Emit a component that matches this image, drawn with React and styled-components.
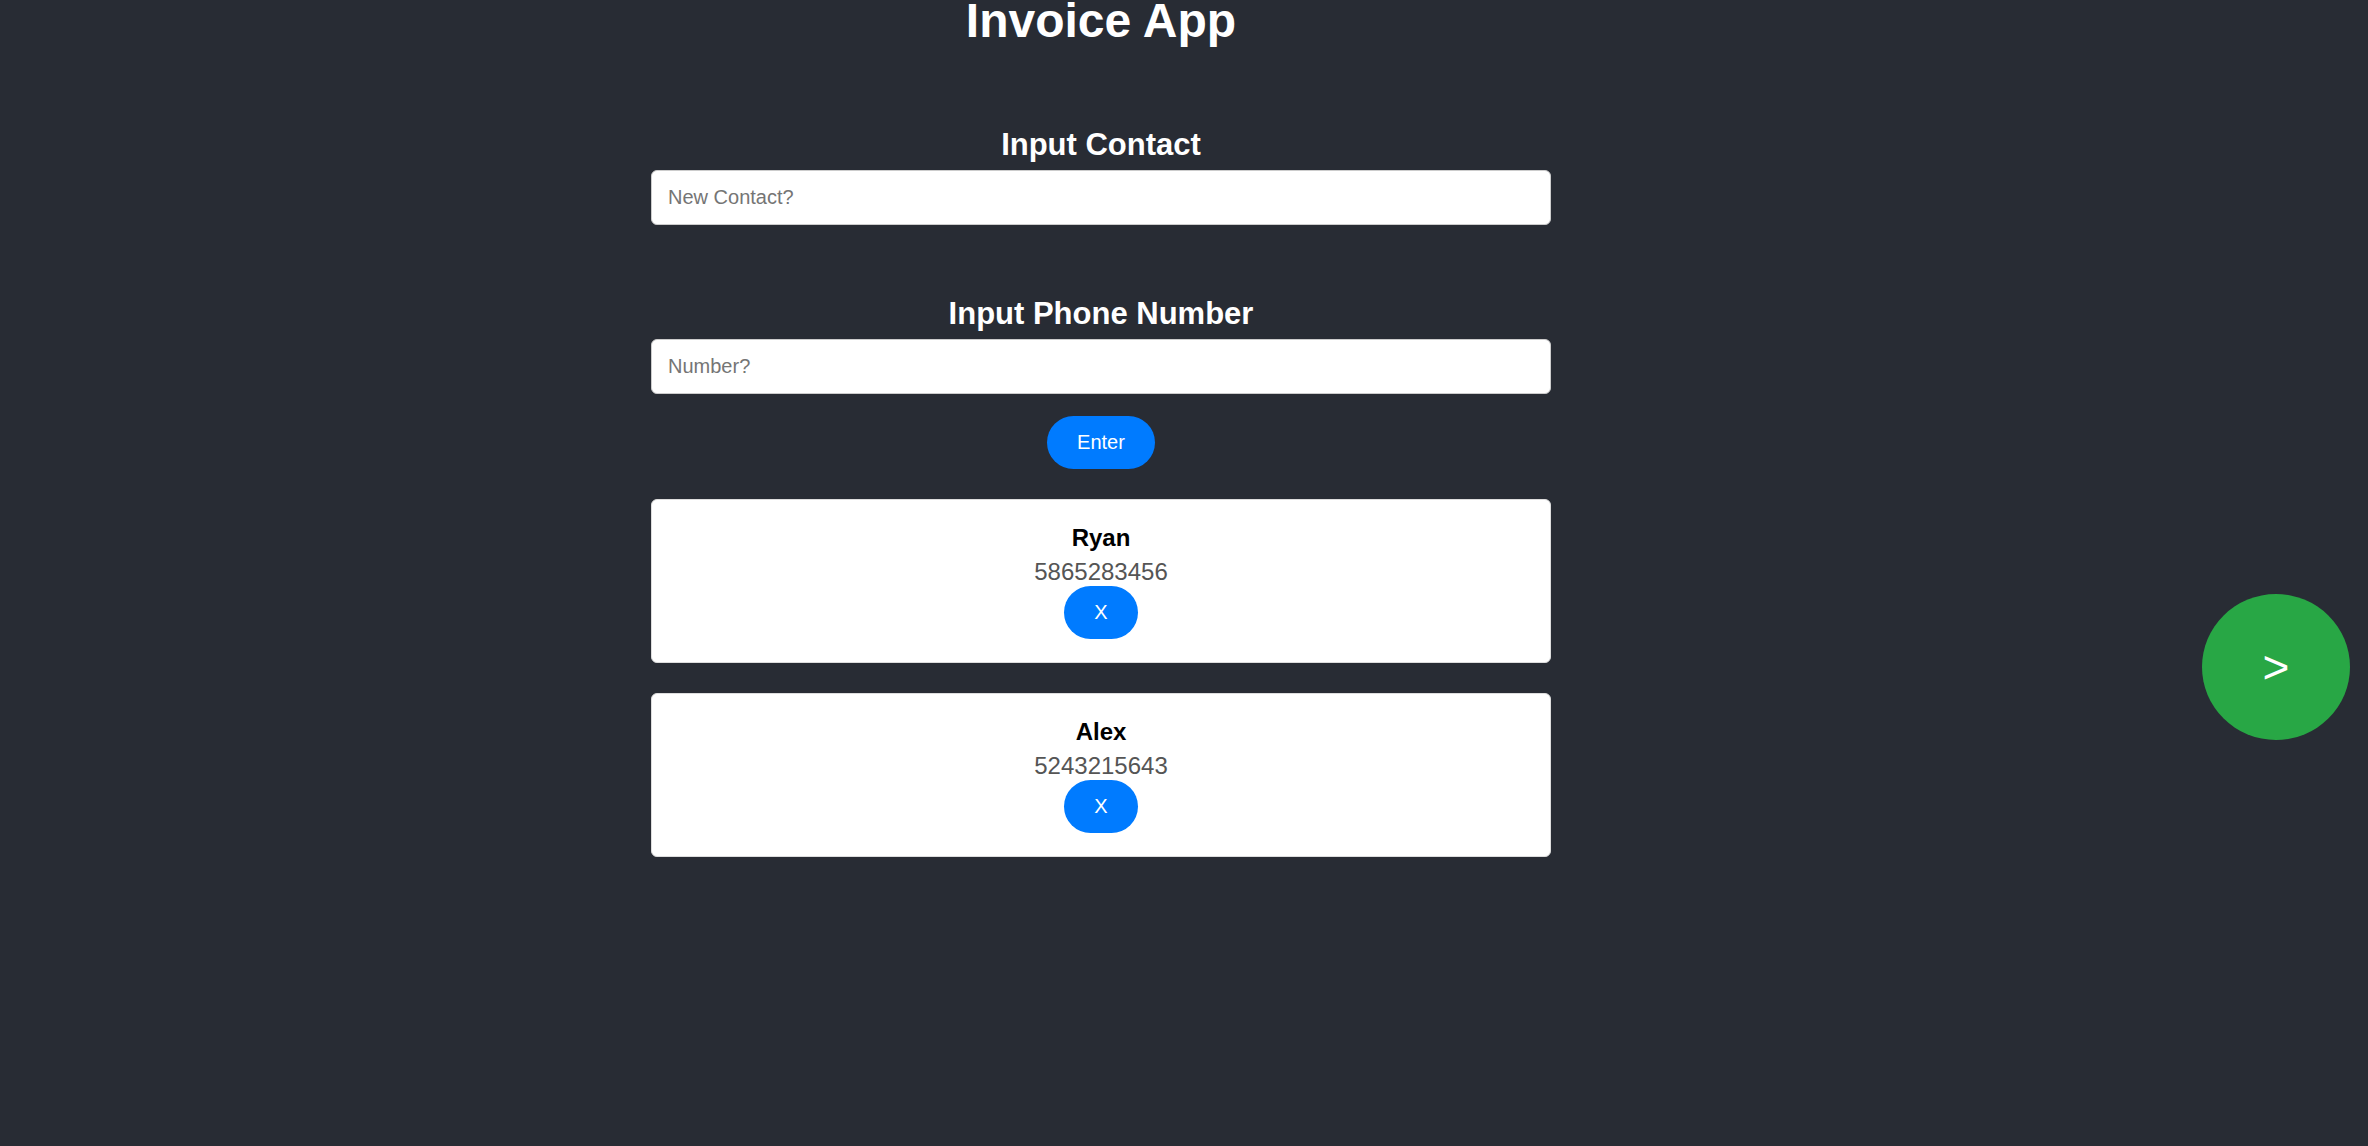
import { useState } from 'react';
import styled, { createGlobalStyle } from 'styled-components';

const GlobalStyle = createGlobalStyle`
    body {
        margin: 0;
        background: #282c34;
        font-family: "Liberation Sans", Arial, sans-serif;
    }
`;

const Pagina = styled.div`
    display: flex;
    min-height: 100vh;
    background: #282c34;
`;

const Principal = styled.main`
    flex: 1;
    display: flex;
    flex-direction: column;
    align-items: center;
`;

const Titulo = styled.h1`
    margin: 0;
    color: #fff;
    font-size: 48px;
    line-height: 41px;
    font-weight: 700;
`;

const Secao = styled.section`
    display: flex;
    flex-direction: column;
    align-items: center;
    margin-top: ${props => props.$topo}px;
`;

const Subtitulo = styled.h2`
    margin: 0 0 7px;
    color: #fff;
    font-size: 31px;
    font-weight: 700;
`;

const Campo = styled.input`
    box-sizing: border-box;
    width: 900px;
    height: 55px;
    padding: 0 16px;
    border: 1px solid #ccc;
    border-radius: 6px;
    background: #fff;
    font-family: inherit;
    font-size: 20px;
    color: #333;
    outline: none;

    &::placeholder {
        color: #757575;
    }
`;

const BotaoAzul = styled.button`
    margin-top: ${props => props.$topo || 0}px;
    padding: 15px 30px;
    border: none;
    border-radius: 30px;
    background: #007bff;
    color: #fff;
    font-family: inherit;
    font-size: 20px;
    line-height: normal;
    cursor: pointer;
`;

const Lista = styled.div`
    display: flex;
    flex-direction: column;
    gap: 30px;
    margin-top: 30px;
`;

const Cartao = styled.div`
    box-sizing: border-box;
    width: 900px;
    padding: 24px 0 23px;
    display: flex;
    flex-direction: column;
    align-items: center;
    background: #fff;
    border: 1px solid #ddd;
    border-radius: 6px;
`;

const Nome = styled.p`
    margin: 0 0 6px;
    color: #000;
    font-size: 24px;
    font-weight: 700;
`;

const Telefone = styled.p`
    margin: 0;
    color: #555;
    font-size: 24px;
`;

const Lateral = styled.aside`
    width: 148px;
    padding: 594px 18px 0 0;
`;

const BotaoAvancar = styled.button`
    width: 148px;
    height: 146px;
    border: none;
    border-radius: 50%;
    background: #28a745;
    color: #fff;
    font-family: inherit;
    font-size: 46px;
    cursor: pointer;
`;

export default function App() {
    const [nome, setNome] = useState('');
    const [numero, setNumero] = useState('');
    const [contatos, setContatos] = useState([
        { id: 1, nome: 'Ryan', numero: '5865283456' },
        { id: 2, nome: 'Alex', numero: '5243215643' },
    ]);

    function adicionar() {
        if (!nome.trim() || !numero.trim()) return;
        setContatos(atual => [...atual, { id: Date.now(), nome, numero }]);
        setNome('');
        setNumero('');
    }

    function remover(id) {
        setContatos(atual => atual.filter(c => c.id !== id));
    }

    return (
        <>
            <GlobalStyle />
            <Pagina>
                <Principal>
                    <Titulo>Invoice App</Titulo>
                    <Secao $topo={86}>
                        <Subtitulo>Input Contact</Subtitulo>
                        <Campo
                            placeholder="New Contact?"
                            value={nome}
                            onChange={e => setNome(e.target.value)}
                        />
                    </Secao>
                    <Secao $topo={71}>
                        <Subtitulo>Input Phone Number</Subtitulo>
                        <Campo
                            placeholder="Number?"
                            value={numero}
                            onChange={e => setNumero(e.target.value)}
                        />
                    </Secao>
                    <BotaoAzul type="button" $topo={22} onClick={adicionar}>
                        Enter
                    </BotaoAzul>
                    <Lista>
                        {contatos.map(contato => (
                            <Cartao key={contato.id}>
                                <Nome>{contato.nome}</Nome>
                                <Telefone>{contato.numero}</Telefone>
                                <BotaoAzul type="button" onClick={() => remover(contato.id)}>
                                    X
                                </BotaoAzul>
                            </Cartao>
                        ))}
                    </Lista>
                </Principal>
                <Lateral>
                    <BotaoAvancar type="button">&gt;</BotaoAvancar>
                </Lateral>
            </Pagina>
        </>
    );
}
